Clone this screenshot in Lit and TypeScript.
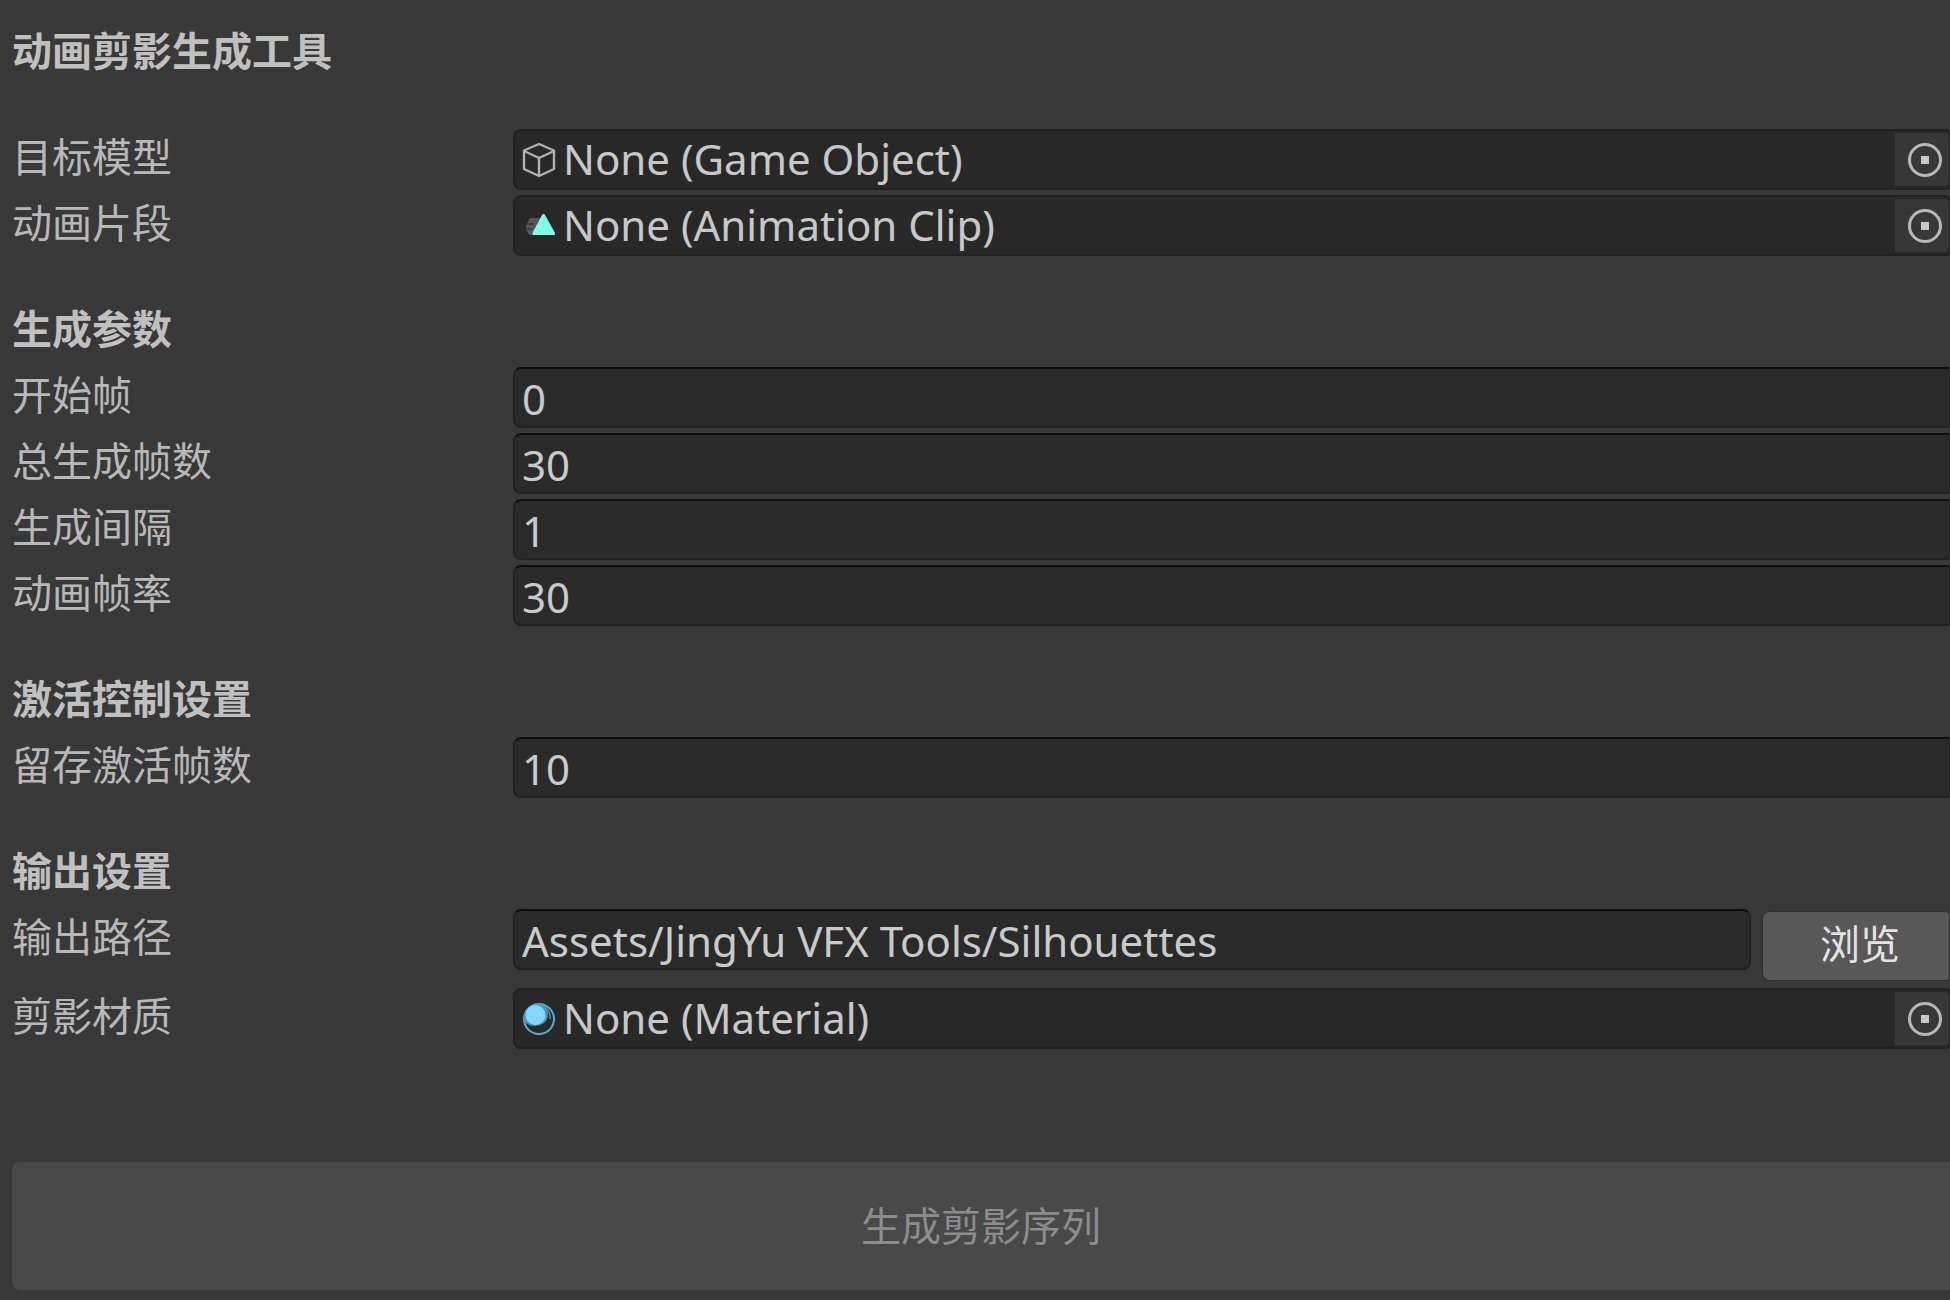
import { LitElement, html, css, svg } from "lit";
import { customElement, property } from "lit/decorators.js";

const cubeIcon = svg`<svg class="icon" viewBox="0 0 36 36" aria-hidden="true">
  <g fill="none" stroke="#b0b0b0" stroke-width="2.400" stroke-linejoin="round">
    <path d="M18 2 L33 8.500 V27 L18 34 L3 27 V8.500 Z"/>
    <path d="M3 9 L18 16 L33 9 M18 16 V34"/>
  </g></svg>`;
const clipIcon = svg`<svg class="icon" viewBox="0 0 36 36" aria-hidden="true">
  <path d="M9 10 H20 L13 27 H8 L5 21 V17 Z" fill="#565656"/>
  <path d="M5 16 H13 M6 21 H11" stroke="#3a3a3a" stroke-width="2"/>
  <path d="M22.500 6 Q23.500 6 24 7 L34 25 Q34.500 27 33 27 H12.500 Q11 27 11.500 25 L21 7 Q21.500 6 22.500 6 Z" fill="#7fffe3"/></svg>`;
const materialIcon = svg`<svg class="icon" viewBox="0 0 36 36" aria-hidden="true">
  <circle cx="18" cy="18" r="15" fill="#262a2c" stroke="#5fa9c9" stroke-width="2"/>
  <path d="M3 20 A15 15 0 0 1 18 3 Q27 4 27 13 Q27 24 14 25 Q7 25 3 20 Z" fill="#4f93b2"/>
  <path d="M23 5 Q30 10 29 18" fill="none" stroke="#4f93b2" stroke-width="1.500"/>
  <circle cx="14.500" cy="14" r="10" fill="#80d8ff"/></svg>`;

@customElement("object-field")
export class ObjectField extends LitElement {
  @property() label = "";
  @property() value = "";
  @property({ attribute: false }) icon: unknown = null;

  static styles = css`
    :host { display: block; }
    .field {
      box-sizing: border-box; display: flex; align-items: center;
      height: 61px; padding-left: 6px;
      background: #282828; border: 2px solid #212121; border-right-width: 1px;
      border-radius: 8px 4px 4px 8px;
    }
    .icon { flex: none; width: 36px; height: 36px; }
    .value {
      flex: 1; min-width: 0; padding: 0 0 2px 6px;
      white-space: nowrap; color: #c8c8c8; font-size: 42px;
    }
    .picker {
      flex: none; display: flex; align-items: center; justify-content: center;
      width: 54px; height: 53px; padding: 0 0 0 6px; border: 0; border-radius: 0 4px 4px 0;
      background: #373737;
    }
    .target { width: 36px; height: 36px; }
  `;

  render() {
    return html`<div class="field" role="group" aria-label=${this.label}>
      ${this.icon}<span class="value">${this.value}</span>
      <button class="picker" aria-label=${this.label}>
        <svg class="target" viewBox="0 0 36 36" aria-hidden="true">
          <circle cx="18" cy="18" r="15.500" fill="none" stroke="#b8b8b8" stroke-width="3"/>
          <rect x="14" y="14" width="8" height="8" fill="#c8c8c8"/>
        </svg>
      </button>
    </div>`;
  }
}

@customElement("app-root")
export class AppRoot extends LitElement {
  static styles = css`
    :host {
      display: block; box-sizing: border-box; min-height: 100vh;
      padding: 23px 0 10px 12px; background: #383838; color: #b8b8b8;
      font: 40px/56px "Noto Sans", "Noto Sans CJK SC", sans-serif;
    }
    .form { display: flex; flex-direction: column; gap: 45px; }
    .section { display: flex; flex-direction: column; gap: 5px; }
    .heading { margin: 0; height: 61px; font: inherit; font-weight: 700; color: #c0c0c0; }
    .row { display: grid; grid-template-columns: 501px minmax(0, 1fr); align-items: start; }
    .input {
      box-sizing: border-box; width: 100%; height: 61px; margin: 0; padding: 2px 6px 0 7px;
      background: #2a2a2a; border: 2px solid #212121; border-top-color: #0d0d0d;
      border-right-width: 1px; border-radius: 8px 2px 2px 8px;
      color: #cacaca; font: inherit; font-size: 42px; outline: none;
    }
    .path { display: grid; grid-template-columns: minmax(0, 1fr) 188px; gap: 11px; }
    .path .input { border-right-width: 2px; border-radius: 8px; }
    .browse {
      height: 70px; margin: 2px 0; padding: 0 0 4px 8px; border: 1px solid #303030;
      border-radius: 8px 4px 4px 8px; background: #585858; color: #e4e4e4; font: inherit;
    }
    .generate {
      display: block; width: 100%; height: 128px; margin: 113px 0 0; padding: 0;
      border: 0; border-radius: 8px 2px 2px 8px; background: #484848; color: #8c8c8c; font: inherit;
    }
  `;

  private numberRow(id: string, label: string, value: number) {
    return html`<div class="row">
      <label for=${id}>${label}</label>
      <input class="input" id=${id} type="text" inputmode="numeric" .value=${String(value)}>
    </div>`;
  }

  private objectRow(label: string, value: string, icon: unknown) {
    return html`<div class="row">
      <span>${label}</span>
      <object-field .label=${label} .value=${value} .icon=${icon}></object-field>
    </div>`;
  }

  render() {
    return html`
      <main>
        <div class="form">
          <h1 class="heading">动画剪影生成工具</h1>
          <section class="section">
            ${this.objectRow("目标模型", "None (Game Object)", cubeIcon)}
            ${this.objectRow("动画片段", "None (Animation Clip)", clipIcon)}
          </section>
          <section class="section">
            <h2 class="heading">生成参数</h2>
            ${this.numberRow("start", "开始帧", 0)}
            ${this.numberRow("total", "总生成帧数", 30)}
            ${this.numberRow("interval", "生成间隔", 1)}
            ${this.numberRow("rate", "动画帧率", 30)}
          </section>
          <section class="section">
            <h2 class="heading">激活控制设置</h2>
            ${this.numberRow("keep", "留存激活帧数", 10)}
          </section>
          <section class="section">
            <h2 class="heading">输出设置</h2>
            <div class="row">
              <label for="path">输出路径</label>
              <div class="path">
                <input class="input" id="path" type="text" .value=${"Assets/JingYu VFX Tools/Silhouettes"}>
                <button class="browse">浏览</button>
              </div>
            </div>
            ${this.objectRow("剪影材质", "None (Material)", materialIcon)}
          </section>
        </div>
        <button class="generate" disabled>生成剪影序列</button>
      </main>`;
  }
}
